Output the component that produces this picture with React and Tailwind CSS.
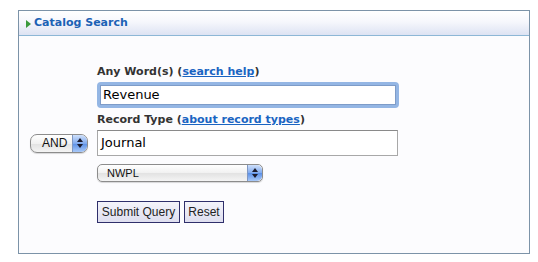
import React from "react";

function Stepper() {
  return (
    <div className="flex h-full w-[15px] flex-col items-center justify-center gap-[2px] rounded-r-[5px] border-l border-[#7f97c2] bg-[linear-gradient(#cfe0fb,#7fa9ee_50%,#5a8fe6_51%,#a9c9f9)]">
      <svg width="6" height="4" viewBox="0 0 6 4"><path d="M3 0L6 4H0z" fill="#1b1b2e" /></svg>
      <svg width="6" height="4" viewBox="0 0 6 4"><path d="M0 0H6L3 4z" fill="#1b1b2e" /></svg>
    </div>
  );
}

function MacSelect({ label, className, textClass }) {
  return (
    <div className={"flex items-stretch overflow-hidden rounded-[5px] border border-[#8c8c8c] bg-[linear-gradient(#ffffff,#f1f1f1_50%,#e2e2e2_51%,#f4f4f4)] shadow-[0_1px_1px_rgba(0,0,0,0.15)] " + className}>
      <div className={"flex flex-1 items-center text-[#111] " + textClass} style={{ fontFamily: '"Liberation Sans", Arial, sans-serif' }}>
        {label}
      </div>
      <Stepper />
    </div>
  );
}

export default function App() {
  const verdana = { fontFamily: '"DejaVu Sans", Verdana, sans-serif' };
  const arial = { fontFamily: '"Liberation Sans", Arial, sans-serif' };
  return (
    <div className="h-[262px] w-[538px] bg-white pl-[18px] pt-[10px]">
      <div className="flex h-[244px] w-[512px] flex-col border border-[#7c93a8] bg-[#fbfbfd]">
        <div className="flex h-[25px] items-center border-b border-[#8db7d6] bg-[linear-gradient(#ffffff,#f6f7fc_45%,#dde3f3)] pl-[7px]">
          <svg width="5" height="8" viewBox="0 0 5 8" className="mr-[3px] mt-[1px]"><path d="M0 0L5 4L0 8z" fill="#3b9a3b" /></svg>
          <span className="text-[11px] font-bold text-[#1c62b5]" style={verdana}>Catalog Search</span>
        </div>
        <div className="flex flex-1 flex-col bg-[#fcfcfe] pl-[11px] pt-[29px]">
          <div className="ml-[67px] text-[11px] font-bold leading-[14px] text-[#333]" style={verdana}>
            Any Word(s) (<a className="text-[#1a64c2] underline">search help</a>)
          </div>
          <div className="ml-[67px] mt-[3px] h-[26px] w-[302px] rounded-[4px] border-[3px] border-[#94b6e4] bg-white">
            <div className="flex h-full items-center border border-[#7e9cc8] pl-[2px] text-[13px] text-black" style={verdana}>Revenue</div>
          </div>
          <div className="ml-[67px] mt-[5px] text-[11px] font-bold leading-[14px] text-[#333]" style={verdana}>
            Record Type (<a className="text-[#1a64c2] underline">about record types</a>)
          </div>
          <div className="mt-[3px] flex items-center gap-[9px]">
            <MacSelect label="AND" className="h-[19px] w-[58px] rounded-[7px]" textClass="pl-[11px] text-[12px]" />
            <div className="flex h-[26px] w-[301px] items-center border border-[#a8a8a8] border-t-[#8a8a8a] bg-white pl-[3px] text-[13px] text-black" style={verdana}>Journal</div>
          </div>
          <MacSelect label="NWPL" className="ml-[67px] mt-[8px] h-[18px] w-[166px]" textClass="pl-[9px] text-[11px]" />
          <div className="ml-[67px] mt-[19px] flex gap-[4px]">
            <button className="h-[22px] w-[83px] border border-[#2f2f6b] bg-[linear-gradient(#f4f4fa,#dedeef)] text-[12px] text-[#222]" style={arial}>Submit Query</button>
            <button className="h-[22px] w-[40px] border border-[#2f2f6b] bg-[linear-gradient(#f4f4fa,#dedeef)] text-[12px] text-[#222]" style={arial}>Reset</button>
          </div>
        </div>
      </div>
    </div>
  );
}
